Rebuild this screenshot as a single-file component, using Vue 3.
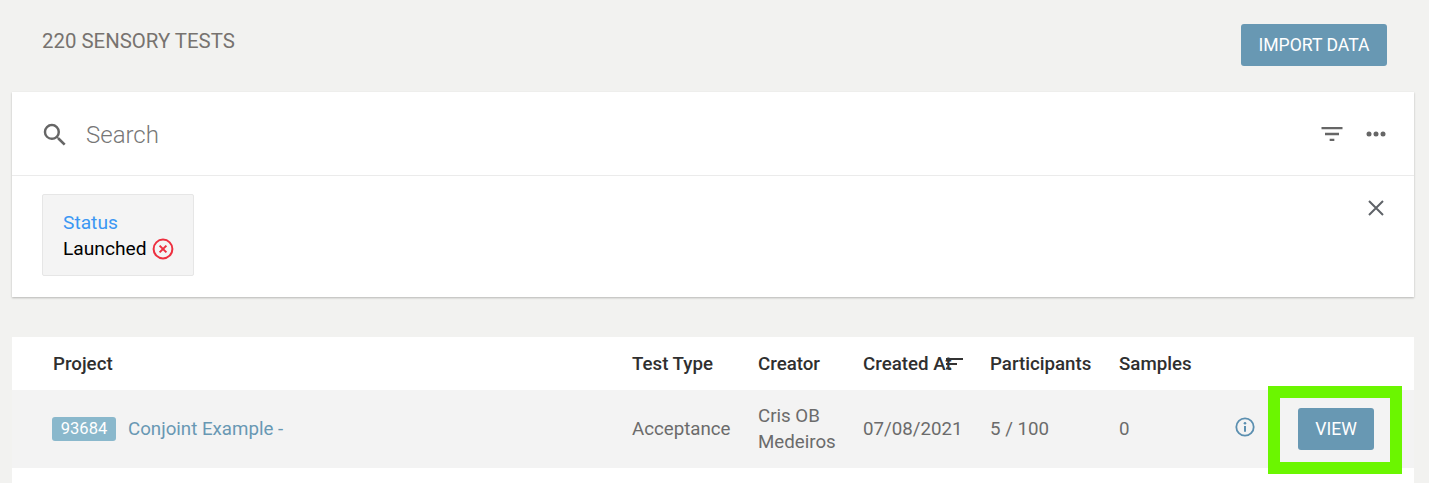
<template>
  <div class="page">
    <header class="top">
      <h2 class="count">220 SENSORY TESTS</h2>
      <button class="btn import">IMPORT DATA</button>
    </header>

    <section class="panel">
      <div class="search">
        <svg class="search-icon" viewBox="0 0 24 24" width="30" height="30">
          <path fill="#666" d="M15.5 14h-.79l-.28-.27A6.47 6.47 0 0 0 16 9.5 6.5 6.5 0 1 0 9.5 16c1.61 0 3.09-.59 4.23-1.57l.27.28v.79l5 4.99L20.49 19l-4.99-5zm-6 0C7.01 14 5 11.99 5 9.5S7.01 5 9.5 5 14 7.01 14 9.5 11.99 14 9.5 14z"/>
        </svg>
        <span class="placeholder">Search</span>
        <svg class="filter-icon" viewBox="0 0 24 24" width="28" height="28">
          <path fill="#666" d="M10 18h4v-2h-4v2zM3 6v2h18V6H3zm3 7h12v-2H6v2z"/>
        </svg>
        <svg class="more-icon" viewBox="0 0 20 6" width="20" height="6">
          <circle cx="3" cy="3" r="2.5" fill="#666" />
          <circle cx="10" cy="3" r="2.5" fill="#666" />
          <circle cx="17" cy="3" r="2.5" fill="#666" />
        </svg>
      </div>
      <div class="filters">
        <div class="chip">
          <div class="chip-label">Status</div>
          <div class="chip-value">
            Launched
            <svg viewBox="0 0 22 22" width="22" height="22">
              <circle cx="11" cy="11" r="9.4" fill="none" stroke="#ed2f3f" stroke-width="2" />
              <path d="M7.6 7.6l6.8 6.8M14.4 7.6l-6.8 6.8" stroke="#ed2f3f" stroke-width="2" />
            </svg>
          </div>
        </div>
        <svg class="close-icon" viewBox="0 0 18 18" width="18" height="18">
          <path d="M2 2l14 14M16 2L2 16" stroke="#5f6368" stroke-width="2" fill="none" />
        </svg>
      </div>
    </section>

    <section class="table">
      <div class="row head">
        <div class="c project">Project</div>
        <div class="c type">Test Type</div>
        <div class="c creator">Creator</div>
        <div class="c created">
          Created At
          <svg class="sort" viewBox="0 0 20 12" width="20" height="12">
            <path d="M2 1h17M2 6h11M2 10.500h5" stroke="#333" stroke-width="2" fill="none" />
          </svg>
        </div>
        <div class="c parts">Participants</div>
        <div class="c samples">Samples</div>
      </div>
      <div class="row body">
        <div class="c project">
          <span class="badge">93684</span>
          <span class="name">Conjoint Example -</span>
        </div>
        <div class="c type">Acceptance</div>
        <div class="c creator">Cris OB Medeiros</div>
        <div class="c created">07/08/2021</div>
        <div class="c parts">5 / 100</div>
        <div class="c samples">0</div>
        <div class="actions">
          <svg class="info" viewBox="0 0 20 20" width="20" height="20">
            <circle cx="10" cy="10" r="8.700" fill="none" stroke="#5b8fb0" stroke-width="1.800" />
            <circle cx="10" cy="6.200" r="1.300" fill="#5b8fb0" />
            <path d="M10 9v5.800" stroke="#5b8fb0" stroke-width="2" />
          </svg>
          <div class="highlight">
            <button class="btn view">VIEW</button>
          </div>
        </div>
      </div>
    </section>
  </div>
</template>

<script setup>
</script>

<style>
html,
body {
  margin: 0;
  background: #f2f2f0;
  overflow: hidden;
}
</style>

<style scoped>
.page {
  height: 483px;
  box-sizing: border-box;
  padding: 0 15px 0 12px;
  font-family: Roboto, "Liberation Sans", sans-serif;
  background: #f2f2f0;
}

.top {
  height: 92px;
  display: flex;
  justify-content: space-between;
  align-items: flex-start;
  padding: 0 27px 0 30px;
}

.count {
  margin: 31px 0 0;
  font-size: 20.4px;
  line-height: 21px;
  font-weight: 400;
  color: #77736f;
}

.btn {
  border: none;
  border-radius: 3px;
  background: #6898b3;
  color: #fff;
  font-family: inherit;
  font-size: 17.6px;
  padding: 0;
}

.import {
  margin-top: 24px;
  width: 146px;
  height: 42px;
}

.panel {
  background: #fff;
  height: 205px;
  box-shadow: 0 1px 2px rgba(0, 0, 0, 0.25);
}

.search {
  height: 83px;
  box-sizing: content-box;
  display: flex;
  align-items: center;
  border-bottom: 1px solid #ebebeb;
  padding: 0 28px 0 28px;
}

.search-icon {
  margin-top: 2px;
}

.placeholder {
  margin: 2px 0 0 16px;
  font-size: 24px;
  font-weight: 300;
  color: #777;
  flex: 1;
}

.filter-icon {
  margin-top: 1px;
}

.more-icon {
  margin-left: 20px;
}

.filters {
  display: flex;
  justify-content: space-between;
  align-items: flex-start;
  padding: 18px 29px 0 30px;
}

.chip {
  width: 150px;
  height: 80px;
  background: #f4f4f4;
  border: 1px solid #e6e6e6;
  border-radius: 2px;
  font-size: 19.2px;
  line-height: 26px;
}

.chip-label {
  margin: 15px 0 0 20px;
  color: #3b97f3;
}

.chip-value {
  margin-left: 20px;
  color: #000;
  display: flex;
  align-items: center;
  gap: 5px;
}

.close-icon {
  margin-top: 5px;
}

.table {
  margin-top: 40px;
  background: #fff;
  height: 146px;
}

.row {
  display: flex;
  align-items: center;
  padding-left: 41px;
  font-size: 18.72px;
}

.head {
  height: 53px;
  font-weight: 500;
  color: #2f2f2f;
}

.body {
  height: 78px;
  background: #f3f3f3;
  color: #6b6b6b;
  line-height: 26px;
}

.c {
  flex: none;
  box-sizing: border-box;
}

.project {
  width: 579px;
}

.body .project {
  margin-left: -1px;
  width: 580px;
  display: flex;
  align-items: center;
}

.type {
  width: 126px;
}

.creator {
  width: 105px;
}

.created {
  width: 127px;
  position: relative;
}

.sort {
  position: absolute;
  left: 81px;
  top: 5px;
}

.parts {
  width: 129px;
}

.samples {
  width: 100px;
}

.badge {
  width: 64px;
  height: 24px;
  line-height: 24px;
  text-align: center;
  background: #8ab8cc;
  color: #fff;
  border-radius: 3px;
  font-size: 16.5px;
}

.name {
  margin-left: 12px;
  color: #6898b3;
}

.actions {
  display: flex;
  align-items: center;
  margin-left: 16px;
}

.info {
  margin-top: -4px;
}

.highlight {
  position: relative;
  margin: 1px 0 0 13px;
  width: 134px;
  height: 88px;
  box-sizing: border-box;
  border: 12px solid #6bf600;
  padding: 0 0 2px 2px;
  display: flex;
  align-items: center;
  justify-content: center;
}

.view {
  width: 76px;
  height: 42px;
}
</style>
